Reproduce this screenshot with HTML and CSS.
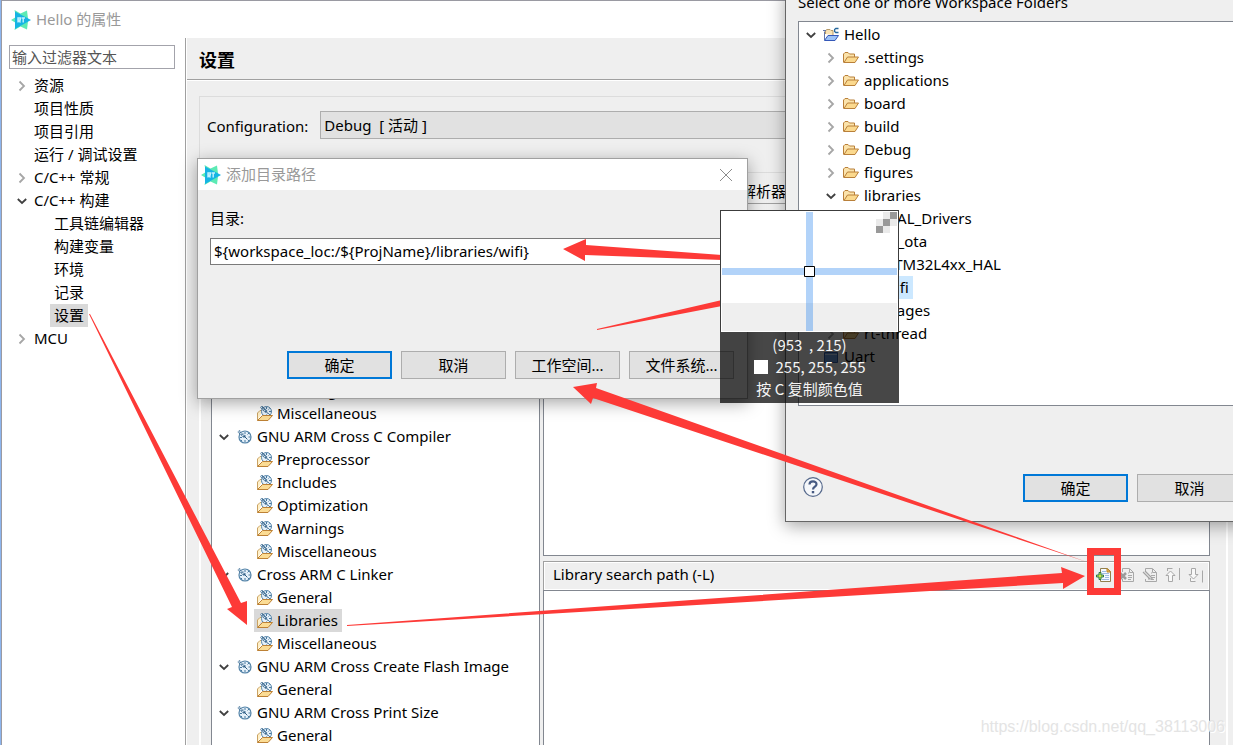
FILE: index.html
```html
<!DOCTYPE html>
<html lang="zh-CN">
<head>
<meta charset="utf-8">
<title>Hello 的属性</title>
<link rel="stylesheet" href="styles.css">
</head>
<body>
<svg class="defs" aria-hidden="true">
  <symbol id="logo" viewBox="0 0 20 20">
    <path fill="#5ceab4" d="M0 10 5 7 3.500 0l6 3.500L16 .5l1 8v3l-1 8-6.500-3-6 3.500L5 13z"/>
    <path fill="#16b4e4" d="M4 1.500 20 10 4 19z"/>
    <path fill="none" stroke="#c4f1ff" stroke-width="1.400" d="M7 12.500V8h2.300v2H7.500l2 2.500M10.500 8h3.500M12.200 8v4.500"/>
  </symbol>
  <symbol id="right" viewBox="0 0 10 12"><path fill="none" stroke="#a6a6a6" stroke-width="1.800" d="M2.500 1.500 7 6l-4.500 4.500"/></symbol>
  <symbol id="down" viewBox="0 0 10 12"><path fill="none" stroke="#404040" stroke-width="1.800" d="M.8 4 5 8l4.200-4"/></symbol>
  <symbol id="folder" viewBox="0 0 16 16">
    <path fill="#fbe3ab" stroke="#b9803a" d="M.5 12.500V4l1.500-1.500h3L6.500 4h5V7"/>
    <path fill="#fbd98e" stroke="#b9803a" stroke-linejoin="round" d="M1 12.500 4.500 7h11l-3.500 5.500z"/>
  </symbol>
  <symbol id="project" viewBox="0 0 16 16">
    <path fill="#f9e3b4" stroke="#b59a6a" d="M2.500 7V3.500L4 2.500h3l1 1h2V8"/>
    <path fill="#d9e6fb" stroke="#6377a8" d="M1.500 13V4.500M0 3.500h3"/>
    <path fill="#9cc2f6" stroke="#3558b8" stroke-linejoin="round" d="M1.500 13.500 5 8.500h10.500L12 13.500z"/>
    <path fill="none" stroke="#24679c" stroke-width="1.300" d="M15.500 1.500H12.800L11.600 2.500v2l1.200 1h2.700"/>
  </symbol>
  <symbol id="closed" viewBox="0 0 16 16"><path fill="#6e9ee0" stroke="#355da8" d="M1.500 13.500v-10h13v10z"/><path stroke="#c4daf8" d="M2 5.500h12"/></symbol>
  <symbol id="tool" viewBox="0 0 16 16">
    <circle cx="8" cy="8" r="6" fill="#e6f1fa" stroke="#5383a8" stroke-width="1.200"/>
    <path stroke="#47799f" d="M8 3v2M8 11v2.500M11.500 8h2M3 8.500h2M10.500 5.500l1.500-1.500M10.500 10.500l1.500 1.500M5 11l-1 1"/>
    <path stroke="#3f6d92" stroke-width="3" d="m1.500 2 6.500 6"/>
    <path stroke="#e4f0fa" stroke-width="1.200" stroke-dasharray="1.500 1" d="m1.500 2.500 6 5.500M3 1.500l5 5"/>
    <path stroke="#2f5c80" d="m7 7 3 3"/>
  </symbol>
  <symbol id="option" viewBox="0 0 16 16">
    <path fill="#fff0c8" stroke="#c9a263" d="M.5 14.500V7L3 4.500H6"/>
    <circle cx="9.500" cy="5.500" r="5" fill="#e6f1fa" stroke="#5383a8"/>
    <path stroke="#47799f" d="M9.500 1v2M12 5.500h2.500M11.500 3.500l1-1M11.500 7.500l1.500 1.500M9.500 8.500v1.500"/>
    <path stroke="#3f6d92" stroke-width="2.600" d="m4 .5 5.500 5.500"/>
    <path stroke="#e4f0fa" stroke-width="1.100" stroke-dasharray="1.300 1" d="m4 1 5 5"/>
    <path stroke="#2f5c80" d="m9 5.500 2.500 2.500"/>
    <path fill="#fbdc94" stroke="#bd8135" stroke-linejoin="round" d="M.5 14.500 5.500 9.500h10l-4.500 5z"/>
  </symbol>
  <symbol id="page" viewBox="0 0 16 16"><path fill="none" stroke="#a8a8a8" d="M3.500 5V1.500h7l4 4v9h-11V12M10.500 2v3.500h4M9 6h1M9 8.500h4M9 10.500h4M9 12.500h3"/></symbol>
  <symbol id="add" viewBox="0 0 16 16">
    <path fill="#f5f9ff" stroke="#91804e" d="M4.500 1.500h7l3 3v10h-10z"/>
    <path fill="#f4c35c" stroke="#b98427" d="M11 1.500v3.500h3.500z"/>
    <path stroke="#9fbbe2" d="M6 4.500h4M6 6.500h7M9 8.500h4M9 10.500h4M6 12.500h7"/>
    <path fill="#c6e84a" stroke="#28754b" d="M3 5.500h2v2.500h2.500v2H5v2.500H3V10H.5V8H3z"/>
  </symbol>
</svg>

<main class="window">
  <header class="titlebar"><svg class="logo"><use href="#logo"/></svg><h1>Hello 的属性</h1></header>
  <div class="window-body">
    <nav class="sidebar">
      <input class="field filter" type="text" aria-label="过滤器" value="输入过滤器文本">
      <ul class="tree nav-tree">
        <li><svg class="chev"><use href="#right"/></svg><span>资源</span></li>
        <li><i class="chev"></i><span>项目性质</span></li>
        <li><i class="chev"></i><span>项目引用</span></li>
        <li><i class="chev"></i><span>运行 / 调试设置</span></li>
        <li><svg class="chev"><use href="#right"/></svg><span>C/C++ 常规</span></li>
        <li><svg class="chev"><use href="#down"/></svg><span>C/C++ 构建</span></li>
        <li class="child"><span>工具链编辑器</span></li>
        <li class="child"><span>构建变量</span></li>
        <li class="child"><span>环境</span></li>
        <li class="child"><span>记录</span></li>
        <li class="child"><span class="selected">设置</span></li>
        <li><svg class="chev"><use href="#right"/></svg><span>MCU</span></li>
      </ul>
    </nav>
    <section class="content">
      <h2>设置</h2>
      <div class="config">
        <label for="config">Configuration:</label>
        <select id="config"><option>Debug&nbsp; [ 活动 ]</option></select>
      </div>
      <div class="panel">
        <div class="tabs"><button type="button">解析器</button></div>
        <div class="columns">
          <ul class="tree tool-tree">
            <li class="child"><svg class="icon"><use href="#option"/></svg><span>Warnings</span></li>
            <li class="child"><svg class="icon"><use href="#option"/></svg><span>Miscellaneous</span></li>
            <li><svg class="chev"><use href="#down"/></svg><svg class="icon"><use href="#tool"/></svg><span>GNU ARM Cross C Compiler</span></li>
            <li class="child"><svg class="icon"><use href="#option"/></svg><span>Preprocessor</span></li>
            <li class="child"><svg class="icon"><use href="#option"/></svg><span>Includes</span></li>
            <li class="child"><svg class="icon"><use href="#option"/></svg><span>Optimization</span></li>
            <li class="child"><svg class="icon"><use href="#option"/></svg><span>Warnings</span></li>
            <li class="child"><svg class="icon"><use href="#option"/></svg><span>Miscellaneous</span></li>
            <li><svg class="chev"><use href="#down"/></svg><svg class="icon"><use href="#tool"/></svg><span>Cross ARM C Linker</span></li>
            <li class="child"><svg class="icon"><use href="#option"/></svg><span>General</span></li>
            <li class="child"><div class="selected-row"><svg class="icon"><use href="#option"/></svg><span>Libraries</span></div></li>
            <li class="child"><svg class="icon"><use href="#option"/></svg><span>Miscellaneous</span></li>
            <li><svg class="chev"><use href="#down"/></svg><svg class="icon"><use href="#tool"/></svg><span>GNU ARM Cross Create Flash Image</span></li>
            <li class="child"><svg class="icon"><use href="#option"/></svg><span>General</span></li>
            <li><svg class="chev"><use href="#down"/></svg><svg class="icon"><use href="#tool"/></svg><span>GNU ARM Cross Print Size</span></li>
            <li class="child"><svg class="icon"><use href="#option"/></svg><span>General</span></li>
          </ul>
          <div class="lists">
            <div class="list first"></div>
            <div class="toolbar">
              <span class="caption">Library search path (-L)</span>
              <button type="button" aria-label="添加"><svg class="icon"><use href="#add"/></svg></button>
              <button type="button" aria-label="删除"><svg class="icon" viewBox="0 0 16 16"><use href="#page"/><path stroke="#9c9c9c" stroke-width="2.500" d="m1 6 6 6M7 6l-6 6"/></svg></button>
              <button type="button" aria-label="编辑"><svg class="icon" viewBox="0 0 16 16"><use href="#page"/><path fill="none" stroke="#a2a2a2" stroke-width="1.200" d="m1 5 7 7M3 4l7 7v1H6"/></svg></button>
              <button type="button" aria-label="上移"><svg class="icon" viewBox="0 0 16 16"><path fill="#f8f8f8" stroke="#a8a8a8" d="m1 8.500 4.500-4.500L10 8.500H7.500v6h-4v-6zM2.500 1v3M2.500 1.500h5M14.500 1v12"/></svg></button>
              <button type="button" aria-label="下移"><svg class="icon" viewBox="0 0 16 16"><path fill="#f8f8f8" stroke="#a8a8a8" d="M3.500 1.500h4v6H10L5.500 12 1 7.500h2.500zM2.500 11v3.500h5M14.500 3.500v12"/></svg></button>
            </div>
            <div class="list"></div>
          </div>
        </div>
      </div>
    </section>
  </div>
</main>

<section class="dialog workspace">
  <p>Select one or more Workspace Folders</p>
  <ul class="tree folder-tree">
    <li><svg class="chev"><use href="#down"/></svg><svg class="icon"><use href="#project"/></svg><span>Hello</span></li>
    <li class="child"><svg class="chev"><use href="#right"/></svg><svg class="icon"><use href="#folder"/></svg><span>.settings</span></li>
    <li class="child"><svg class="chev"><use href="#right"/></svg><svg class="icon"><use href="#folder"/></svg><span>applications</span></li>
    <li class="child"><svg class="chev"><use href="#right"/></svg><svg class="icon"><use href="#folder"/></svg><span>board</span></li>
    <li class="child"><svg class="chev"><use href="#right"/></svg><svg class="icon"><use href="#folder"/></svg><span>build</span></li>
    <li class="child"><svg class="chev"><use href="#right"/></svg><svg class="icon"><use href="#folder"/></svg><span>Debug</span></li>
    <li class="child"><svg class="chev"><use href="#right"/></svg><svg class="icon"><use href="#folder"/></svg><span>figures</span></li>
    <li class="child"><svg class="chev"><use href="#down"/></svg><svg class="icon"><use href="#folder"/></svg><span>libraries</span></li>
    <li class="grandchild"><span>HAL_Drivers</span></li>
    <li class="grandchild"><span>rt_ota</span></li>
    <li class="grandchild"><span>STM32L4xx_HAL</span></li>
    <li class="grandchild"><span class="picked">wifi</span></li>
    <li class="child"><svg class="chev"><use href="#right"/></svg><svg class="icon"><use href="#folder"/></svg><span>packages</span></li>
    <li class="child"><svg class="chev"><use href="#right"/></svg><svg class="icon"><use href="#folder"/></svg><span>rt-thread</span></li>
    <li><i class="chev"></i><svg class="icon"><use href="#closed"/></svg><span>Uart</span></li>
  </ul>
  <footer>
    <button type="button" class="help" aria-label="帮助"><svg viewBox="0 0 20 20"><circle cx="10" cy="10" r="9.300" fill="#f5f7fa" stroke="#56698c" stroke-width="1.200"/><path fill="none" stroke="#465a82" stroke-width="2.200" d="M6.500 7.500C6.500 3.300 13.500 3.400 13.500 7.200 13.500 9.600 10 9.500 10 12.500"/><path fill="#465a82" d="M8.800 14h2.400v2.300H8.800z"/></svg></button>
    <button type="button" class="btn default">确定</button>
    <button type="button" class="btn">取消</button>
  </footer>
</section>

<section class="dialog add-path">
  <header class="titlebar"><svg class="logo"><use href="#logo"/></svg><h2>添加目录路径</h2>
    <button type="button" class="close" aria-label="关闭"><svg viewBox="0 0 12 12"><path stroke="#8c8c8c" d="m0 0 12 12M12 0 0 12"/></svg></button></header>
  <div class="form">
    <label for="dir">目录:</label>
    <input id="dir" class="field" type="text" value="${workspace_loc:/${ProjName}/libraries/wifi}">
  </div>
  <footer>
    <button type="button" class="btn default">确定</button>
    <button type="button" class="btn">取消</button>
    <button type="button" class="btn">工作空间...</button>
    <button type="button" class="btn">文件系统...</button>
  </footer>
</section>

<p class="watermark">https://blog.csdn.net/qq_38113006</p>

<svg class="arrows" aria-hidden="true">
  <path d="M89 314h1L241 603l6-2v24l-20-16 5-2z"/>
  <path d="M347 625v1L1063 583v6l22-13-24-9 1 6z"/>
  <path d="M1087 562 596 388l1-5-24 4 18 17 2-6z"/>
  <path d="m563 249 23-10v6l136 10v5L585 255v6z"/>
  <path d="M597 329 722 300v6l-125 24z"/>
  <path d="M1087 548h34v47h-34zM1094 555v33h20v-33z" fill-rule="evenodd"/>
</svg>

<aside class="picker">
  <svg class="lens" viewBox="0 0 179 122">
    <path fill="#3c3c3c" d="M0 0h179v122H0z"/><path fill="#fff" d="M1 1h177v121H1z"/>
    <path fill="#efefef" d="M2 93h175v28H2z"/>
    <path fill="#999" d="M170 2h7v7h-7zM163 9h7v7h-7zM156 16h7v7h-7z"/>
    <path fill="#eaeaea" d="M163 2h7v7h-7zM156 9h7v7h-7zM170 9h7v7h-7zM163 16h7v7h-7z"/>
    <path fill="#b2d3f9" d="M86 2h7v91h-7zM2 58h175v7H2z"/><path fill="#a6c8ef" d="M86 93h7v28h-7z"/>
    <path fill="#fff" stroke="#000" d="M84.500 56.500h10v10h-10z"/>
  </svg>
  <div class="readout">
    <span>(953&nbsp; , 215)</span>
    <span class="rgb"><i></i>255, 255, 255</span>
    <span>按 C 复制颜色值</span>
  </div>
</aside>
</body>
</html>
```
FILE: styles.css
```css
* { box-sizing: border-box; }

body {
  margin: 0;
  height: 100vh;
  overflow: hidden;
  position: relative;
  padding: 1px 0 0 1px;
  background: linear-gradient(90deg, #8db5ee 1px, #9a9aa2 1px);
  color: #000;
  font: 15px/23px "Noto Sans", "Noto Sans CJK SC", sans-serif;
}

h1, h2, p, ul { margin: 0; padding: 0; }
ul { list-style: none; }
button, input, select { font: inherit; color: inherit; margin: 0; }
.defs { display: none; }
svg { display: block; flex: none; }

.window {
  height: 100%;
  margin-left: 1px;
  background: #fff;
  display: flex;
  flex-direction: column;
}
.titlebar {
  display: flex;
  align-items: center;
  gap: 5px;
  background: #fff;
  color: #999;
}
.titlebar h1, .titlebar h2 { font-size: 15px; font-weight: 400; }
.window > .titlebar { height: 37px; flex: none; padding-left: 9px; }
.logo { width: 20px; height: 20px; }
.window-body { flex: 1; min-height: 0; display: flex; }

.sidebar {
  width: 184px;
  flex: none;
  padding: 7px 10px 0 7px;
  border-right: 1px solid #a0a0a0;
}
.field {
  display: block;
  width: 100%;
  background: #fff;
  border: 1px solid #7a7a7a;
  border-radius: 0;
}
.filter { height: 24px; padding: 0 2px 2px; color: #555; border-color: #a3a3ab; }

.tree li { display: flex; align-items: center; height: 23px; white-space: nowrap; }
.chev { width: 10px; height: 12px; flex: none; }
.icon { width: 16px; height: 16px; }
.nav-tree { padding: 5px 0 0 8px; }
.nav-tree li { gap: 7px; }
.nav-tree .child { padding-left: 33px; }
.nav-tree .child span { padding: 0 4px; }
.nav-tree .selected { background: #d9d9d9; }

.content {
  flex: 1;
  min-width: 0;
  margin-left: 1px;
  background: #efefef;
  display: flex;
  flex-direction: column;
  overflow: hidden;
}
.content > h2 {
  height: 42px;
  flex: none;
  padding: 11px 12px 0;
  font-size: 18px;
  font-weight: 700;
  border-bottom: 1px solid #a0a0a0;
  box-shadow: 0 1px #fff;
}
.config {
  height: 76px;
  flex: none;
  margin: 16px 5px 0 12px;
  padding: 14px 16px 0 7px;
  border: 1px solid #dcdcdc;
  border-bottom: 0;
  display: flex;
  align-items: flex-start;
  gap: 12px;
}
.config label { padding-top: 4px; }
.config select {
  flex: 1;
  height: 28px;
  padding: 0 3px;
  appearance: none;
  background: #e1e1e1;
  border: 1px solid #adadad;
  border-radius: 0;
}
.panel {
  flex: 1;
  min-height: 0;
  margin: 0 5px 0 12px;
  padding-right: 16px;
  border: 2px solid #fff;
  border-width: 0 2px;
  display: flex;
  flex-direction: column;
  border-top: 1px solid #dcdcdc;
}
.tabs {
  height: 31px;
  flex: none;
  display: flex;
  align-items: flex-end;
  padding-left: 540px;
  border-bottom: 1px solid #a0a0a0;
}
.tabs button { border: 0; background: none; padding: 0; }
.columns { flex: 1; min-height: 0; display: flex; gap: 3px; padding: 14px 0 0 10px; }
.tool-tree {
  width: 329px;
  flex: none;
  overflow: hidden;
  padding: 160px 0 0 7px;
  background: #fff;
  border: 1px solid #828790;
  border-bottom: 0;
}
.tool-tree .chev { margin-right: 8px; }
.tool-tree .icon { margin-right: 4px; }
.tool-tree .child { padding-left: 38px; }
.selected-row {
  display: flex;
  align-items: center;
  height: 23px;
  margin-left: -3px;
  padding: 0 4px 0 3px;
  background: #d9d9d9;
}
.lists { flex: 1; min-width: 0; display: flex; flex-direction: column; }
.list { flex: 1; background: #fff; border: 1px solid #828790; border-bottom: 0; }
.list.first { flex: none; height: 338px; border-bottom: 1px solid #828790; margin-bottom: 5px; }
.toolbar {
  height: 29px;
  flex: none;
  display: flex;
  align-items: center;
  gap: 7px;
  padding: 0 5px 3px 9px;
  border: 1px solid #a0a0a0;
  border-bottom: 0;
  box-shadow: inset 0 0 0 1px #fff;
}
.toolbar .caption { flex: 1; }
.toolbar button { border: 0; padding: 0; background: none; }

.dialog { position: absolute; background: #efefef; border: 1px solid #a0a0a0; box-shadow: 0 4px 16px rgba(0, 0, 0, .35); }
.dialog footer { display: flex; gap: 9px; justify-content: flex-end; padding: 0 13px; }
.btn {
  width: 105px;
  height: 28px;
  padding: 0;
  background: #e1e1e1;
  border: 1px solid #adadad;
  border-radius: 0;
}
.btn.default { border: 2px solid #0078d7; }

.workspace { left: 785px; right: -23px; top: -10px; border-color: #666; padding-bottom: 19px; }
.workspace p { padding-left: 12px; }
.folder-tree {
  height: 385px;
  margin: 7px 12px 68px;
  padding: 1px 0 0 7px;
  background: #fff;
  border: 1px solid #828790;
}
.folder-tree .chev { margin-right: 7px; }
.folder-tree .icon { margin-right: 5px; }
.folder-tree .child { padding-left: 20px; }
.folder-tree .grandchild { padding-left: 80px; }
.picked { background: #cce8ff; margin-left: -6px; padding: 0 4px; }
.help { width: 20px; height: 20px; padding: 0; margin: 3px auto 0 4px; border: 0; background: none; }

.add-path { left: 197px; top: 158px; width: 551px; padding-bottom: 19px; }
.add-path .titlebar { height: 31px; padding: 0 15px 0 3px; }
.close { width: 12px; height: 12px; margin-left: auto; padding: 0; border: 0; background: none; }
.form { padding: 17px 12px 86px; }
.form label { display: block; margin-bottom: 8px; }
.form .field { height: 27px; padding: 0 3px 2px; }

.watermark {
  position: absolute;
  right: 8px;
  bottom: 8px;
  color: #e4e4e4;
  font: 16px/20px "Liberation Sans", sans-serif;
  text-shadow: 1px 1px #fff;
}
.arrows { position: absolute; left: 0; top: 0; width: 100%; height: 100%; fill: #fd3a37; pointer-events: none; }

.picker { position: absolute; left: 720px; top: 210px; width: 179px; }
.lens { width: 100%; }
.readout {
  display: flex;
  flex-direction: column;
  align-items: center;
  padding: 2px 0 3px;
  background: rgba(0, 0, 0, .72);
  color: #f4f4f4;
  font: 15px/22px "Noto Sans CJK SC", sans-serif;
}
.rgb { display: flex; align-items: center; gap: 8px; }
.rgb i { width: 14px; height: 14px; background: #fff; }
```
